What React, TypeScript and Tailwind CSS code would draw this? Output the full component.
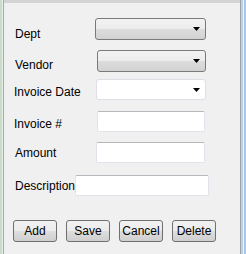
const font = { fontFamily: '"Liberation Sans", Arial, sans-serif' };

function Arrow() {
  return (
    <svg width="7" height="4" viewBox="0 0 7 4" className="block">
      <path d="M0 0H7L3.5 4Z" fill="#000" />
    </svg>
  );
}

function Combo({ width, white }: { width: string; white?: boolean }) {
  return (
    <div
      className={`${width} h-full flex items-center justify-end pr-[5px] rounded-[3px] border ${
        white
          ? "bg-white border-[#dcdfe6]"
          : "border-[#7a7a7a] bg-[linear-gradient(to_bottom,#f3f3f3_0%,#ececec_48%,#dcdcdc_52%,#d2d2d2_100%)]"
      }`}
    >
      <Arrow />
    </div>
  );
}

function TextBox({ width }: { width: string }) {
  return (
    <div
      className={`${width} h-full bg-white rounded-[2px] border border-[#e2e3ea] border-t-[#b5b7bd]`}
    />
  );
}

function Row({
  label,
  labelWidth,
  pt,
  h,
  mt,
  children,
}: {
  label: string;
  labelWidth: string;
  pt: string;
  h: string;
  mt: string;
  children: React.ReactNode;
}) {
  return (
    <div className={`flex ${h} ${mt}`}>
      <div className={`${labelWidth} ${pt} text-[12px] leading-[14px] text-black whitespace-nowrap`}>
        {label}
      </div>
      {children}
    </div>
  );
}

function Btn({ label }: { label: string }) {
  return (
    <button className="w-[44px] h-[22px] rounded-[3px] border border-[#707070] bg-[linear-gradient(to_bottom,#f2f2f2_0%,#ebebeb_48%,#dddddd_52%,#cfcfcf_100%)] text-[12px] leading-[14px] text-black flex items-center justify-center">
      {label}
    </button>
  );
}

export default function App() {
  return (
    <div className="w-[246px] h-[254px] flex bg-[#f0f0f0]" style={font}>
      <div className="w-[3px] h-full bg-[#c9dcc9] border-r border-[#e6eee6]" />
      <div className="w-[1px] h-full bg-[#a9a9a9]" />
      <div className="flex-1 flex flex-col">
        <div className="h-[3px] bg-[#d4d4d4]" />
        <div className="flex flex-col pt-[15px] pl-[10px]">
          <Row label="Dept" labelWidth="w-[81px] pl-[1px]" pt="pt-[9px]" h="h-[22px]" mt="mt-0">
            <Combo width="w-[111px]" />
          </Row>
          <Row label="Vendor" labelWidth="w-[83px] pl-[1px]" pt="pt-[8px]" h="h-[22px]" mt="mt-[10px]">
            <Combo width="w-[109px]" />
          </Row>
          <Row label="Invoice Date" labelWidth="w-[82px]" pt="pt-[6px]" h="h-[21px]" mt="mt-[7px]">
            <Combo width="w-[110px]" white />
          </Row>
          <Row label="Invoice #" labelWidth="w-[83px]" pt="pt-[6px]" h="h-[21px]" mt="mt-[11px]">
            <TextBox width="w-[108px]" />
          </Row>
          <Row label="Amount" labelWidth="w-[82px] pl-[1px]" pt="pt-[4px]" h="h-[21px]" mt="mt-[10px]">
            <TextBox width="w-[109px]" />
          </Row>
          <Row label="Description" labelWidth="w-[61px] pl-[1px]" pt="pt-[4px]" h="h-[21px]" mt="mt-[12px]">
            <TextBox width="w-[134px]" />
          </Row>
          <div className="flex gap-[9px] mt-[24px] ml-[-1px]">
            <Btn label="Add" />
            <Btn label="Save" />
            <Btn label="Cancel" />
            <Btn label="Delete" />
          </div>
        </div>
      </div>
      <div className="w-[1px] h-full bg-[#a0a0a0]" />
      <div className="w-[2px] h-full bg-[#b9d1f1]" />
      <div className="w-[1px] h-full bg-[#eaf1fb]" />
      <div className="w-[2px] h-full bg-[#a9c5ec]" />
    </div>
  );
}
